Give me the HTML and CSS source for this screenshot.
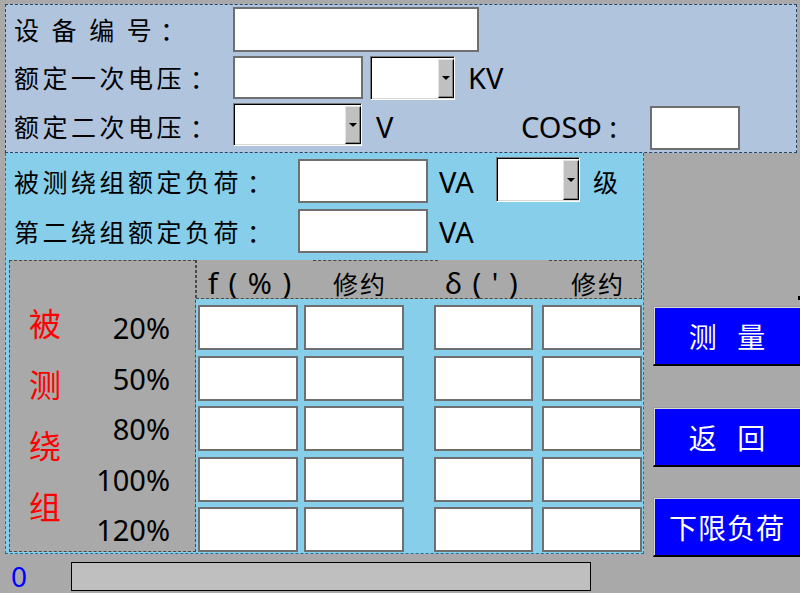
FILE: index.html
```html
<!DOCTYPE html>
<html lang="zh">
<head>
<meta charset="utf-8">
<title>设备参数</title>
<link rel="stylesheet" href="styles.css">
</head>
<body>
<div class="top">
  <div class="row r1">
    <span class="lbl cjk">设 备 编 号<span class="col">：</span></span>
    <div class="inp i-sn"></div>
  </div>
  <div class="row r2">
    <span class="lbl cjk">额定一次电压<span class="col">：</span></span>
    <div class="inp i-130"></div>
    <div class="sel s-85"><div class="sbtn"><i class="arr"></i></div></div>
    <span class="lat unit-kv">KV</span>
  </div>
  <div class="row r3">
    <span class="lbl cjk">额定二次电压<span class="col">：</span></span>
    <div class="sel s-129"><div class="sbtn"><i class="arr"></i></div></div>
    <span class="lat unit-v">V</span>
    <span class="lat cos">COSΦ :</span>
    <div class="inp i-cos"></div>
  </div>
</div>
<div class="mid">
  <div class="sky">
    <div class="srow">
      <span class="slbl cjk">被测绕组额定负荷<span class="col">：</span></span>
      <div class="inp i-130b"></div>
      <span class="lat unit-va">VA</span>
      <div class="sel s-84"><div class="sbtn"><i class="arr"></i></div></div>
      <span class="cjk ji">级</span>
    </div>
    <div class="srow">
      <span class="slbl cjk">第二绕组额定负荷<span class="col">：</span></span>
      <div class="inp i-130b"></div>
      <span class="lat unit-va">VA</span>
    </div>
    <div class="table">
      <div class="lbox">
        <div class="redcol">
          <span>被</span><span>测</span><span>绕</span><span>组</span>
        </div>
        <div class="pctcol">
          <span>20%</span><span>50%</span><span>80%</span><span>100%</span><span>120%</span>
        </div>
      </div>
      <div class="rpart">
        <div class="thead">
          <div class="th th1"><span class="lat hl">f ( % )</span></div>
          <div class="th th2"><span class="cjk hz">修约</span></div>
          <div class="th th3"><span class="lat hl">δ ( ' )</span></div>
          <div class="th th4"><span class="cjk hz">修约</span></div>
        </div>
        <div class="grid">
          <div class="inp c"></div><div class="inp c"></div><div class="inp c c3"></div><div class="inp c"></div>
          <div class="inp c"></div><div class="inp c"></div><div class="inp c c3"></div><div class="inp c"></div>
          <div class="inp c"></div><div class="inp c"></div><div class="inp c c3"></div><div class="inp c"></div>
          <div class="inp c"></div><div class="inp c"></div><div class="inp c c3"></div><div class="inp c"></div>
          <div class="inp c"></div><div class="inp c"></div><div class="inp c c3"></div><div class="inp c"></div>
        </div>
      </div>
    </div>
  </div>
  <div class="btns">
    <div class="mark"></div>
    <div class="btn b1"><span class="bt sp">测 量</span></div>
    <div class="btn b2"><span class="bt sp">返 回</span></div>
    <div class="btn b3"><span class="bt">下限负荷</span></div>
  </div>
</div>
<div class="bottom">
  <span class="zero">0</span>
  <div class="prog"></div>
</div>
</body>
</html>
```
FILE: styles.css
```css
* { box-sizing: border-box; }
html, body { margin: 0; padding: 0; }
body {
  width: 800px;
  height: 593px;
  overflow: hidden;
  background: #a9a9a9;
  font-family: "Noto Sans", "Noto Sans CJK SC", sans-serif;
  color: #000;
}
.cjk {
  font-family: "Noto Sans CJK SC", sans-serif;
  font-size: 25px;
  letter-spacing: 3.5px;
  line-height: 1;
}
.col {
  font-family: "Noto Sans CJK JP", "Noto Sans CJK SC", sans-serif;
  padding-left: 5px;
}
.lat {
  font-family: "Noto Sans", "Noto Sans CJK SC", sans-serif;
  font-size: 29px;
  line-height: 1;
}

/* top panel */
.top {
  margin: 4px 0 0 5px;
  width: 792px;
  height: 149px;
  background: #b0c4de;
  border: 1px dashed #26466a;
  padding-left: 8px;
}
.row { display: flex; align-items: center; }
.r1 { height: 49px; }
.r2 { height: 47px; }
.r3 { height: 51px; }
.lbl { width: 219px; white-space: pre; }

.inp { background: #fff; border: 2px solid #6f6f6f; }
.i-sn { width: 246px; height: 45px; }
.i-130 { width: 130px; height: 43px; }
.i-cos { width: 90px; height: 44px; margin-top: 2px; }
.i-130b { width: 130px; height: 44px; }

.sel {
  display: flex;
  justify-content: flex-end;
  background: #fff;
  border: 1px solid;
  border-color: #7a7a7a #fff #fff #7a7a7a;
  box-shadow: inset 1px 1px 0 #000, inset -1px -1px 0 #d8d8d8;
  padding: 2px 0 1px 0;
}
.sbtn {
  width: 16px;
  height: 100%;
  background: #c0c0c0;
  border: 1px solid;
  border-color: #e4e4e4 #000 #000 #e4e4e4;
  box-shadow: inset -1px -1px 0 #808080;
  display: flex;
  align-items: center;
  justify-content: center;
}
.arr {
  width: 0; height: 0;
  border-left: 4px solid transparent;
  border-right: 4px solid transparent;
  border-top: 4px solid #000;
}
.s-85 { width: 85px; height: 44px; margin-left: 7px; }
.s-129 { width: 129px; height: 43px; margin-bottom: 5px; }
.s-84 { width: 84px; height: 45px; margin-bottom: 3px; }
.unit-kv { margin-left: 13px; }
.unit-v { margin-left: 14px; width: 145px; }
.cos { width: 129px; white-space: pre; }

/* middle */
.mid { display: flex; margin-left: 5px; }
.sky {
  width: 639px;
  height: 401px;
  background: #87ceeb;
  border: 1px dashed #2d6e8c;
  border-top: none;
  padding-top: 3px;
}
.srow {
  height: 50px;
  display: flex;
  align-items: center;
  padding-left: 8px;
}
.slbl { width: 284px; white-space: pre; }
.unit-va { margin-left: 11px; width: 57px; }
.ji { margin-left: 13px; }

.table {
  display: flex;
  margin-top: 4px;
  padding-left: 3px;
}
.lbox {
  width: 187px;
  height: 292px;
  border: 1px dashed #4a4a4a;
  background: #a9a9a9;
  display: flex;
}
.redcol {
  width: 70px;
  display: flex;
  flex-direction: column;
  align-items: center;
  padding-top: 31px;
  color: #ff0000;
  font-family: "Noto Sans CJK SC", sans-serif;
  font-size: 32px;
  line-height: 61px;
}
.pctcol {
  flex: 1;
  display: flex;
  flex-direction: column;
  align-items: flex-end;
  padding-top: 42px;
  padding-right: 25px;
  font-family: "Noto Sans", sans-serif;
  font-size: 29px;
  line-height: 50.5px;
}

.rpart { width: 446px; }
.thead {
  display: flex;
  height: 39px;
  background: #a9a9a9;
  border-bottom: 1px dashed #4a4a4a;
}
.th {
  display: flex;
  align-items: center;
  padding-top: 7px;
  white-space: pre;
}
.th1 { width: 117px; padding-left: 11px; border-left: 1px dashed #4a4a4a; }
.th2 { width: 125px; padding-left: 20px; border-top: 1px dashed #4a4a4a; }
.th3 { width: 111px; padding-left: 7px; }
.th4 { width: 93px; padding-left: 22px; border-top: 1px dashed #4a4a4a; border-right: 1px dashed #4a4a4a; }
.hz { letter-spacing: 2px; }
.hl { letter-spacing: 1.5px; }

.grid {
  display: grid;
  grid-template-columns: 100px 106px 129px 109px;
  grid-auto-rows: 45px;
  row-gap: 5.5px;
  justify-items: end;
  padding-left: 2px;
  padding-top: 6px;
}
.c { width: 100px; height: 45px; }
.c3 { width: 99px; }

/* buttons */
.btns {
  margin-left: 9px;
  width: 147px;
  display: flex;
  flex-direction: column;
}
.mark {
  align-self: flex-end;
  width: 2px;
  height: 4px;
  background: #000;
  margin-top: 143px;
}
.btn {
  height: 60px;
  background: #0000ff;
  border-top: 1px solid #9c9c9c;
  border-left: 1px solid #9c9c9c;
  border-bottom: 2px solid #000;
  box-shadow: inset 1px 1px 0 #d8d8d8;
  display: flex;
  align-items: center;
  justify-content: center;
  color: #fff;
}
.b1 { margin-top: 6px; }
.b2 { margin-top: 41px; }
.b3 { margin-top: 30px; }
.bt {
  font-family: "Noto Sans CJK SC", sans-serif;
  font-size: 28px;
  letter-spacing: 1px;
  line-height: 1;
  white-space: pre;
}
.bt.sp { letter-spacing: 7px; padding-left: 7px; }

/* bottom */
.bottom {
  display: flex;
  align-items: center;
  height: 39px;
  padding-left: 11px;
}
.zero {
  width: 60px;
  color: #0000ff;
  font-family: "Noto Sans", sans-serif;
  font-size: 28px;
  line-height: 30px;
  margin-top: -2px;
}
.prog {
  width: 520px;
  height: 29px;
  background: #bfbfbf;
  border: 1px solid #000;
}
```
